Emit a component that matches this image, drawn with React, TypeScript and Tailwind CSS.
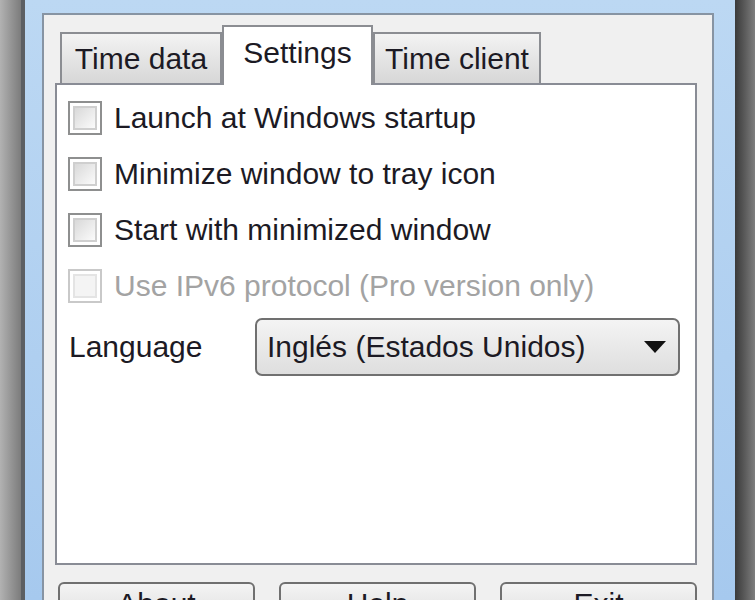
import React from "react";

const font = { fontFamily: '"Liberation Sans", Arial, sans-serif' };

interface CheckRowProps {
  label: string;
  disabled?: boolean;
}

const CheckBox: React.FC<{ disabled?: boolean }> = ({ disabled }) => (
  <span
    className={`flex h-[34px] w-[34px] flex-none items-center justify-center border-2 bg-white ${
      disabled ? "border-[#c9c9c9]" : "border-[#8e8f8f]"
    }`}
  >
    <span
      className={`h-[24px] w-[24px] border-2 ${
        disabled
          ? "border-[#e4e4e4] bg-[#f4f4f4]"
          : "border-[#cfcfcf] bg-gradient-to-br from-[#d9d9d9] to-[#fbfbfb]"
      }`}
    />
  </span>
);

const CheckRow: React.FC<CheckRowProps> = ({ label, disabled }) => (
  <div className="flex h-[56px] items-center gap-[12px]">
    <CheckBox disabled={disabled} />
    <span className={disabled ? "text-[#a3a3a3]" : "text-[#1c1a24]"}>{label}</span>
  </div>
);

const Tab: React.FC<{ label: string; width: string; selected?: boolean }> = ({
  label,
  width,
  selected,
}) =>
  selected ? (
    <div
      className={`${width} relative z-10 -mb-[2px] flex h-[60px] items-start justify-center border-2 border-b-0 border-[#8b8d92] bg-white pt-[11px] text-[#1c1a24]`}
    >
      {label}
    </div>
  ) : (
    <div
      className={`${width} flex h-[51px] items-center justify-center border-2 border-b-0 border-[#8b8d92] bg-gradient-to-b from-[#f3f3f3] to-[#d7d7d7] pt-[1px] text-[#1c1a24]`}
    >
      {label}
    </div>
  );

const Button: React.FC<{ label: string }> = ({ label }) => (
  <div className="flex h-[44px] w-[197px] items-center justify-center rounded-[6px] border-2 border-[#707070] bg-gradient-to-b from-[#f4f4f4] to-[#dcdcdc] text-[#1c1a24]">
    {label}
  </div>
);

export default function App() {
  return (
    <div className="flex h-[600px] w-[755px] overflow-hidden text-[30px] leading-none" style={font}>
      <div className="w-[21px] flex-none bg-gradient-to-r from-[#b2b2b2] to-[#7c7c7c]" />
      <div className="flex flex-1 flex-col border-l-[4px] border-[#5c5f63] bg-gradient-to-b from-[#bcd8f3] to-[#a6c9ee] pl-[17px] pr-[21px] pt-[13px]">
        <div className="flex flex-1 flex-col border-2 border-b-0 border-[#8794a3] bg-[#f0f0f0] pl-[11px] pr-[15px] pt-[10px]">
          <div className="flex h-[58px] items-end pl-[5px]">
            <Tab label="Time data" width="w-[162px]" />
            <Tab label="Settings" width="w-[151px]" selected />
            <Tab label="Time client" width="w-[168px]" />
          </div>
          <div className="flex h-[482px] flex-col border-2 border-[#898c95] bg-white pl-[11px] pt-[5px]">
            <CheckRow label="Launch at Windows startup" />
            <CheckRow label="Minimize window to tray icon" />
            <CheckRow label="Start with minimized window" />
            <CheckRow label="Use IPv6 protocol (Pro version only)" disabled />
            <div className="mt-[4px] flex h-[58px] items-center">
              <span className="w-[187px] pl-[1px] text-[#1c1a24]">Language</span>
              <div className="flex h-[58px] w-[425px] items-center justify-between rounded-[7px] border-2 border-[#707070] bg-gradient-to-b from-[#f4f4f4] to-[#dedede] pl-[10px] pr-[12px] text-[#1c1a24]">
                <span>Inglés (Estados Unidos)</span>
                <svg width="22" height="12" viewBox="0 0 22 12">
                  <polygon points="0,0 22,0 11,12" fill="#111" />
                </svg>
              </div>
            </div>
          </div>
          <div className="ml-[3px] mt-[17px] flex gap-[24px]">
            <Button label="About" />
            <Button label="Help" />
            <Button label="Exit" />
          </div>
        </div>
      </div>
      <div className="w-[23px] flex-none bg-gradient-to-r from-[#3a3a3a] to-[#8a8a8a]" />
    </div>
  );
}
